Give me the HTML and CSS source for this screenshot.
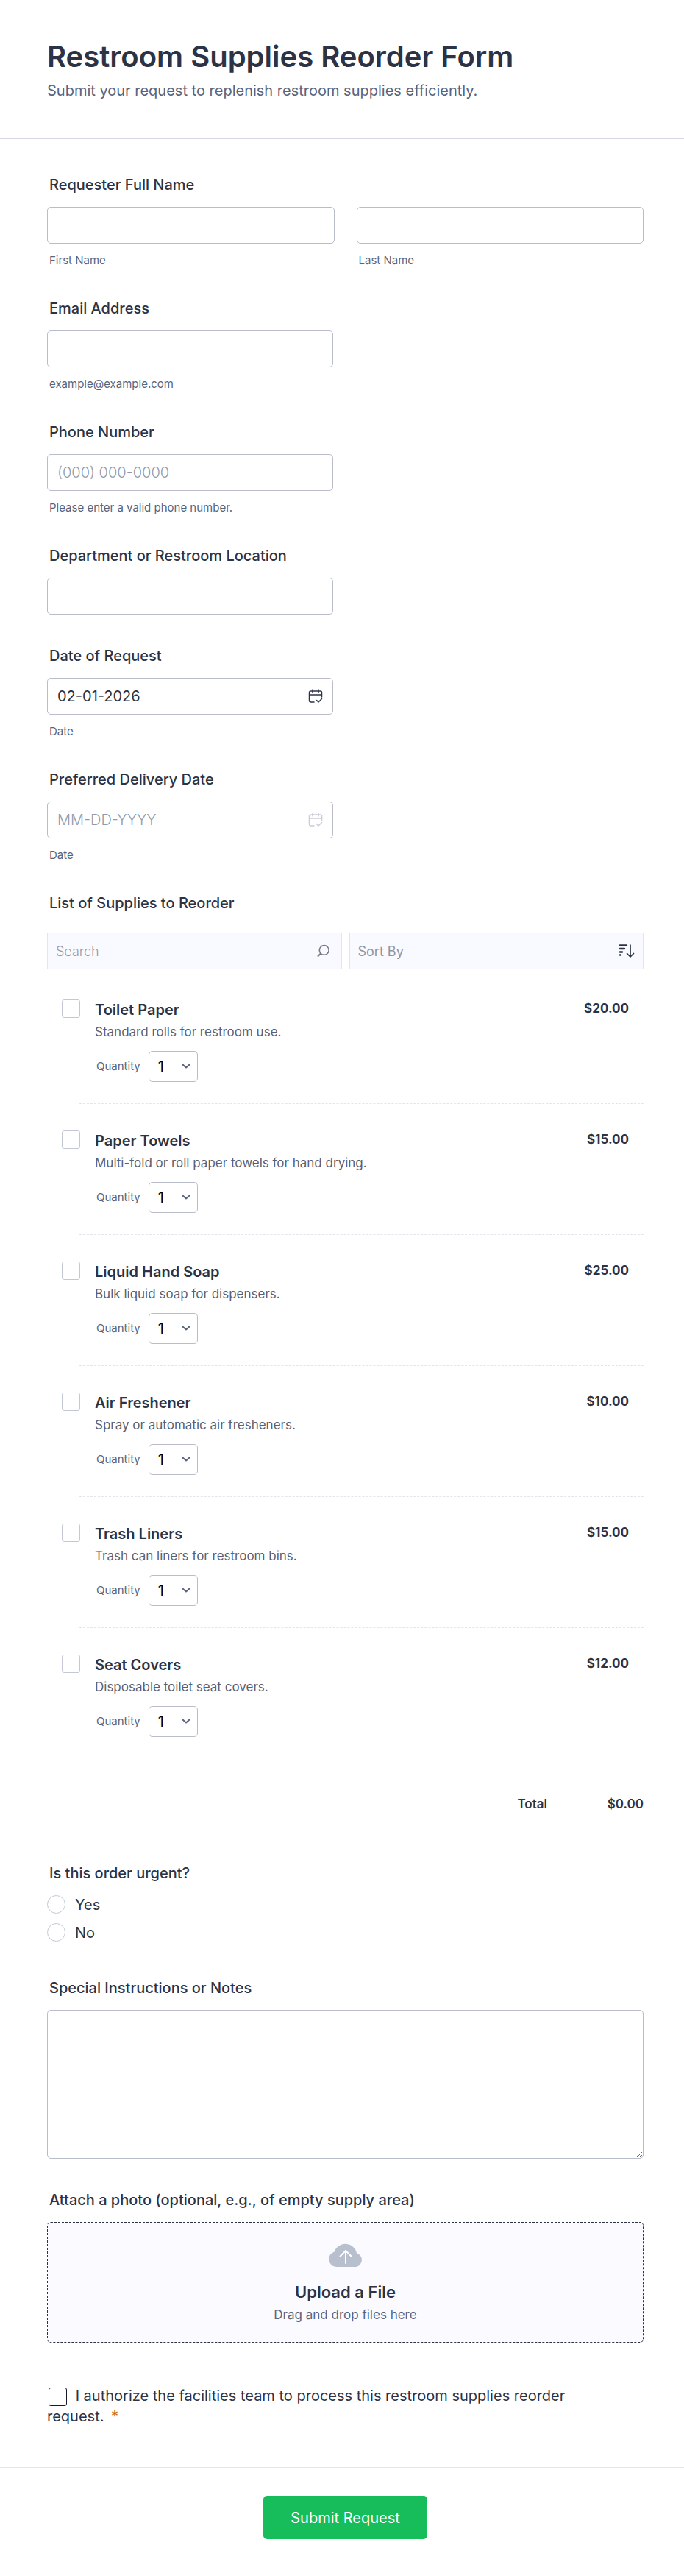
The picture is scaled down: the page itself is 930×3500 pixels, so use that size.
FILE: index.html
```html
<!DOCTYPE html>
<html lang="en">
  <head>
    <meta charset="UTF-8" />
    <meta name="viewport" content="width=device-width, initial-scale=1.0" />
    <title>Restroom Supplies Reorder Form</title>
    <link rel="stylesheet" href="styles.css">
  </head>
  <body>
    <!-- shared icons -->
    <svg class="hidden" aria-hidden="true">
      <symbol id="icon-calendar" viewBox="0 0 20 20">
        <path d="M8 18H4a2.5 2.5 0 0 1-2.5-2.500V5A2 2 0 0 1 3.500 3h13a2 2 0 0 1 2 2v6M1.500 8h17M6 1v4M14 1v4M11.500 15.500l2.500 2.500 4.500-4.500" fill="none" stroke="currentColor" stroke-width="1.5" stroke-linecap="round" stroke-linejoin="round" />
      </symbol>
      <symbol id="icon-chevron" viewBox="0 0 12 8">
        <path d="M1.5 1.5L6 5.5l4.5-4" fill="none" stroke="currentColor" stroke-width="2" stroke-linecap="round" stroke-linejoin="round" />
      </symbol>
    </svg>

    <form class="form">
      <header class="header">
        <h1>Restroom Supplies Reorder Form</h1>
        <p>Submit your request to replenish restroom supplies efficiently.</p>
      </header>

      <div class="fields">
        <fieldset class="form-group">
          <legend class="label">Requester Full Name</legend>
          <div class="name-row">
            <div>
              <input type="text" id="firstName" />
              <label class="sub-label" for="firstName">First Name</label>
            </div>
            <div>
              <input type="text" id="lastName" />
              <label class="sub-label" for="lastName">Last Name</label>
            </div>
          </div>
        </fieldset>

        <div class="form-group half">
          <label class="label" for="email">Email Address</label>
          <input type="email" id="email" />
          <span class="sub-label">example@example.com</span>
        </div>

        <div class="form-group half">
          <label class="label" for="phone">Phone Number</label>
          <input type="tel" id="phone" placeholder="(000) 000-0000" />
          <span class="sub-label">Please enter a valid phone number.</span>
        </div>

        <div class="form-group half">
          <label class="label" for="department">Department or Restroom Location</label>
          <input type="text" id="department" />
        </div>

        <div class="form-group half">
          <label class="label" for="requestDate">Date of Request</label>
          <div class="input-icon">
            <input type="text" id="requestDate" value="02-01-2026" />
            <svg class="calendar"><use href="#icon-calendar" /></svg>
          </div>
          <span class="sub-label">Date</span>
        </div>

        <div class="form-group half">
          <label class="label" for="deliveryDate">Preferred Delivery Date</label>
          <div class="input-icon">
            <input type="text" id="deliveryDate" placeholder="MM-DD-YYYY" />
            <svg class="calendar muted"><use href="#icon-calendar" /></svg>
          </div>
          <span class="sub-label">Date</span>
        </div>

        <fieldset class="form-group supplies">
          <legend class="label">List of Supplies to Reorder</legend>
          <div class="toolbar">
            <div class="input-icon">
              <input type="text" class="tool" placeholder="Search" aria-label="Search" />
              <svg class="search" viewBox="0 0 18 18">
                <path d="M5 12.5L1.5 16" fill="none" stroke="currentColor" stroke-width="2" stroke-linecap="round" />
                <circle cx="9.7" cy="8" r="6.4" fill="none" stroke="currentColor" stroke-width="1.6" />
              </svg>
            </div>
            <div class="input-icon">
              <select class="tool" aria-label="Sort By">
                <option>Sort By</option>
              </select>
              <svg class="sort" viewBox="0 0 22 20">
                <path d="M2 2.5h9M2 7h6M2 11.5h3M2 15.5h1" fill="none" stroke="currentColor" stroke-width="2.4" stroke-linecap="round" />
                <path d="M16 2v15.5M11.5 13.5l4.5 4.5 4.5-4.5" fill="none" stroke="currentColor" stroke-width="1.7" stroke-linecap="round" stroke-linejoin="round" />
              </svg>
            </div>
          </div>

          <div class="products">
            <div class="product">
              <input type="checkbox" id="item1" />
              <div class="details">
                <label class="name" for="item1">Toilet Paper</label>
                <p class="desc">Standard rolls for restroom use.</p>
                <div class="quantity">
                  <label for="qty1">Quantity</label>
                  <div class="qty-box">
                    <select id="qty1"><option>1</option><option>2</option><option>3</option></select>
                    <svg><use href="#icon-chevron" /></svg>
                  </div>
                </div>
              </div>
              <span class="price">$20.00</span>
            </div>

            <div class="product">
              <input type="checkbox" id="item2" />
              <div class="details">
                <label class="name" for="item2">Paper Towels</label>
                <p class="desc">Multi-fold or roll paper towels for hand drying.</p>
                <div class="quantity">
                  <label for="qty2">Quantity</label>
                  <div class="qty-box">
                    <select id="qty2"><option>1</option><option>2</option><option>3</option></select>
                    <svg><use href="#icon-chevron" /></svg>
                  </div>
                </div>
              </div>
              <span class="price">$15.00</span>
            </div>

            <div class="product">
              <input type="checkbox" id="item3" />
              <div class="details">
                <label class="name" for="item3">Liquid Hand Soap</label>
                <p class="desc">Bulk liquid soap for dispensers.</p>
                <div class="quantity">
                  <label for="qty3">Quantity</label>
                  <div class="qty-box">
                    <select id="qty3"><option>1</option><option>2</option><option>3</option></select>
                    <svg><use href="#icon-chevron" /></svg>
                  </div>
                </div>
              </div>
              <span class="price">$25.00</span>
            </div>

            <div class="product">
              <input type="checkbox" id="item4" />
              <div class="details">
                <label class="name" for="item4">Air Freshener</label>
                <p class="desc">Spray or automatic air fresheners.</p>
                <div class="quantity">
                  <label for="qty4">Quantity</label>
                  <div class="qty-box">
                    <select id="qty4"><option>1</option><option>2</option><option>3</option></select>
                    <svg><use href="#icon-chevron" /></svg>
                  </div>
                </div>
              </div>
              <span class="price">$10.00</span>
            </div>

            <div class="product">
              <input type="checkbox" id="item5" />
              <div class="details">
                <label class="name" for="item5">Trash Liners</label>
                <p class="desc">Trash can liners for restroom bins.</p>
                <div class="quantity">
                  <label for="qty5">Quantity</label>
                  <div class="qty-box">
                    <select id="qty5"><option>1</option><option>2</option><option>3</option></select>
                    <svg><use href="#icon-chevron" /></svg>
                  </div>
                </div>
              </div>
              <span class="price">$15.00</span>
            </div>

            <div class="product">
              <input type="checkbox" id="item6" />
              <div class="details">
                <label class="name" for="item6">Seat Covers</label>
                <p class="desc">Disposable toilet seat covers.</p>
                <div class="quantity">
                  <label for="qty6">Quantity</label>
                  <div class="qty-box">
                    <select id="qty6"><option>1</option><option>2</option><option>3</option></select>
                    <svg><use href="#icon-chevron" /></svg>
                  </div>
                </div>
              </div>
              <span class="price">$12.00</span>
            </div>
          </div>

          <div class="total">
            <span>Total</span>
            <span class="amount">$0.00</span>
          </div>
        </fieldset>

        <fieldset class="form-group urgent">
          <legend class="label">Is this order urgent?</legend>
          <label class="choice"><input type="radio" name="urgent" value="yes" />Yes</label>
          <label class="choice"><input type="radio" name="urgent" value="no" />No</label>
        </fieldset>

        <div class="form-group">
          <label class="label" for="notes">Special Instructions or Notes</label>
          <textarea id="notes"></textarea>
        </div>

        <div class="form-group">
          <div class="label">Attach a photo (optional, e.g., of empty supply area)</div>
          <button type="button" class="upload">
            <svg viewBox="0 0 48 32">
              <path d="M11 32A10.5 10.5 0 0 1 8.5 11.5 15.8 15.8 0 0 1 39 13.500 9.500 9.500 0 0 1 38 32z" fill="#b8bfcd" />
              <path d="M24 27V10M16.5 17.500L24 10l7.500 7.500" fill="none" stroke="#fff" stroke-width="2" stroke-linecap="round" stroke-linejoin="round" />
            </svg>
            <strong>Upload a File</strong>
            <span>Drag and drop files here</span>
          </button>
        </div>

        <div class="terms">
          <input type="checkbox" id="authorize" required />
          <label for="authorize">I authorize the facilities team to process this restroom supplies reorder request. <span class="required">*</span></label>
        </div>
      </div>

      <div class="footer">
        <button type="submit" class="submit">Submit Request</button>
      </div>
    </form>
  </body>
</html>
```

FILE: styles.css
```css
* {
  box-sizing: border-box;
}
body {
  margin: 0;
  background-color: #fff;
  font-family: Inter, "Liberation Sans", sans-serif;
  font-size: 20px;
  line-height: 28px;
  color: #2c3345;
}
.hidden {
  display: none;
}
.header {
  padding: 50px 64px;
  border-bottom: 1px solid #d3d8e2;
}
h1 {
  margin: 0;
  font-size: 40px;
  font-weight: 600;
  line-height: 54px;
}
.header p {
  margin: 4px 0 0;
  color: #57647e;
  line-height: 30px;
}
.fields {
  padding: 48px 55px 55px 64px;
}
fieldset {
  margin: 0;
  padding: 0;
  border: none;
  min-width: 0;
}
.form-group {
  margin-bottom: 42px;
}
.half {
  width: 48%;
}
.label {
  display: block;
  padding: 0 3px;
  margin-bottom: 16px;
  font-weight: 500;
}
input,
select,
textarea,
button {
  font-family: inherit;
  font-size: 20px;
  color: #2c3345;
}
input:not([type="checkbox"]):not([type="radio"]),
textarea {
  display: block;
  width: 100%;
  height: 50px;
  padding: 0 13px;
  border: 1px solid #b8bdc9;
  border-radius: 5px;
  background-color: #fff;
}
textarea {
  height: 202px;
}
::placeholder {
  color: #8f9bac;
  font-weight: 300;
}
.sub-label {
  display: block;
  padding: 0 3px;
  margin-top: 14px;
  font-size: 15px;
  line-height: 18px;
  color: #57647e;
}
.name-row {
  display: grid;
  grid-template-columns: 1fr 1fr;
  gap: 30px;
}

/* icons sit over the right end of the field */
.input-icon {
  position: relative;
}
.input-icon svg {
  position: absolute;
  top: 50%;
  right: 14px;
  transform: translateY(-50%);
  pointer-events: none;
}
.input-icon .calendar {
  width: 20px;
  height: 20px;
}
.input-icon .muted {
  color: #c8ccd8;
}
.input-icon .search {
  width: 18px;
  height: 18px;
  right: 16px;
  color: #777985;
}
.input-icon .sort {
  width: 22px;
  height: 20px;
  right: 12px;
}

.supplies {
  margin-bottom: 66px;
}
.supplies .label {
  margin-bottom: 26px;
}
.toolbar {
  display: grid;
  grid-template-columns: 1fr 1fr;
  gap: 10px;
}
.toolbar .input-icon .tool {
  width: 100%;
  height: 50px;
  padding: 0 11px;
  border: 1px solid #e3e5ee;
  border-radius: 0;
  background-color: #f9faff;
  font-size: 18px;
}
select {
  appearance: none;
}
.toolbar select.tool {
  color: #8d95a5;
}
.products {
  padding-top: 22px;
  border-bottom: 1px solid #e3e5ee;
}
.product {
  display: flex;
  align-items: flex-start;
  position: relative;
  padding: 19px 20px 47px;
}
.product:last-child {
  padding-bottom: 35px;
}
.product + .product::before {
  content: "";
  position: absolute;
  top: -18px;
  left: 44px;
  right: 0;
  border-top: 1px dashed #e3e5ee;
}
input[type="checkbox"],
input[type="radio"] {
  appearance: none;
  flex: none;
  width: 25px;
  height: 25px;
  margin: 0;
  border: 1px solid #c3c8d4;
  border-radius: 3px;
  background-color: #fff;
}
input[type="radio"] {
  border-radius: 50%;
}
input[type="checkbox"]:checked,
input[type="radio"]:checked {
  background-color: #2c3345;
}
.details {
  flex: 1;
  padding-left: 20px;
}
.name {
  display: block;
  font-weight: 600;
}
.desc {
  margin: 4px 0 14px;
  font-size: 17px;
  line-height: 24px;
  color: #5a5f73;
}
.quantity {
  display: flex;
  align-items: center;
  gap: 11px;
  padding-left: 2px;
  font-size: 15px;
  color: #57647e;
}
.qty-box {
  position: relative;
}
.qty-box select {
  display: block;
  width: 67px;
  height: 42px;
  padding: 0 12px;
  border: 1px solid #b8bdc9;
  border-radius: 5px;
  background-color: #fff;
  color: #000;
}
.qty-box svg {
  position: absolute;
  top: 17px;
  right: 10px;
  width: 12px;
  height: 8px;
  color: #57647e;
  pointer-events: none;
}
.price {
  font-size: 17px;
  font-weight: 700;
  line-height: 24px;
}
.total {
  display: flex;
  justify-content: flex-end;
  padding-top: 41px;
  font-size: 17px;
  font-weight: 600;
}
.amount {
  min-width: 131px;
  text-align: right;
}
.urgent {
  margin-bottom: 36px;
}
.choice {
  display: flex;
  align-items: center;
  gap: 13px;
  height: 25px;
  margin-bottom: 13px;
}
.upload {
  display: flex;
  flex-direction: column;
  align-items: center;
  width: 100%;
  height: 164px;
  padding: 28px 20px 0;
  border: 1px dashed #2c3345;
  border-radius: 5px;
  background-color: #fbfbff;
  cursor: pointer;
}
.upload svg {
  width: 48px;
  height: 32px;
}
.upload strong {
  margin-top: 20px;
  font-size: 22px;
  font-weight: 600;
  line-height: 28px;
}
.upload span {
  margin-top: 5px;
  font-size: 17px;
  line-height: 24px;
  color: #57647e;
}
.terms {
  width: 90%;
  padding-top: 16px;
}
.terms input[type="checkbox"] {
  margin: 0 6px 0 2px;
  border-color: #1a1a26;
  vertical-align: middle;
}
.required {
  margin-left: 4px;
  color: #c0672f;
}
.footer {
  padding: 38px 55px 50px 64px;
  border-top: 1px solid #e3e5ee;
  text-align: center;
}
.submit {
  height: 59px;
  padding: 0 37px;
  border: none;
  border-radius: 5px;
  background-color: #18bd5b;
  color: #fff;
  cursor: pointer;
}
```
